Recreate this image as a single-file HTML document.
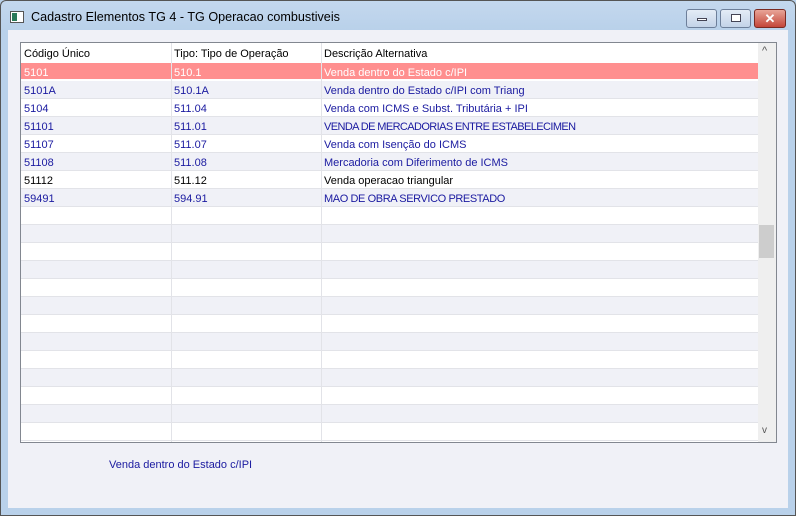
<!DOCTYPE html>
<html><head><style>
*{margin:0;padding:0;box-sizing:border-box}
body{width:796px;height:516px;overflow:hidden;background:#b9d1ea;font-family:"Liberation Sans",sans-serif;font-size:11px;position:relative}
.win{position:absolute;left:0;top:0;width:796px;height:516px;border-radius:6px 6px 0 0;background:linear-gradient(#c4d8ee,#b9d1ea 30px);box-shadow:inset 0 0 0 1px #555}
.title{position:absolute;left:31px;top:10px;font-size:12.6px;color:#000}
.ico{position:absolute;left:10px;top:11px;width:14px;height:12px;border:1px solid #555;background:#fff}
.ico:before{content:"";position:absolute;left:1px;top:1px;width:5px;height:8px;background:#2a7a5a}
.client{position:absolute;left:8px;top:30px;width:780px;height:478px;background:#f0f1f7}
.btn{position:absolute;top:9px;height:19px;border:1px solid #6d7f9a;border-radius:3px;background:linear-gradient(#e4ecf6,#c3d3e8)}
.grid{position:absolute;left:20px;top:42px;width:757px;height:401px;border:1px solid #828790;background:#fff;overflow:hidden}
.row{position:absolute;left:0;width:737px;height:18px;border-bottom:1px solid #e2e3e8;color:#1a1aa0}
.row span{position:absolute;top:4px}
.c1{left:3px}.c2{left:153px}.c3{left:303px}
.vl{position:absolute;top:0;width:1px;height:400px;background:#e2e3e8}
.sb{position:absolute;left:737px;top:0;width:18px;height:399px;background:#efefef}
</style></head><body>
<div class="win">
<div class="ico"></div>
<div class="title">Cadastro Elementos TG 4 - TG Operacao combustiveis</div>
<div class="btn" style="left:686px;width:31px"><div style="position:absolute;left:10px;top:8px;width:10px;height:3px;background:#fff;border:1px solid #445"></div></div>
<div class="btn" style="left:720px;width:31px"><div style="position:absolute;left:10px;top:4px;width:10px;height:8px;background:#fff;border:1px solid #445"></div></div>
<div class="btn" style="left:754px;width:32px;background:linear-gradient(#e8a598,#c4463a);border-color:#7a2a22;color:#fff;font-weight:bold;text-align:center;font-size:13px;line-height:17px">✕</div>
<div class="client"></div>
<div class="grid">
<div class="row" style="top:0;height:20px;color:#000;border:none"><span class="c1" style="top:5px">Código Único</span><span class="c2" style="top:5px">Tipo: Tipo de Operação</span><span class="c3" style="top:5px">Descrição Alternativa</span></div>
<div class="row" style="top:20px;background:#ff8f8f;color:#fff;border-bottom:2px solid #fff"><span class="c1">5101</span><span class="c2">510.1</span><span class="c3">Venda dentro do Estado c/IPI</span></div>
<div class="row" style="top:38px;background:#f0f1f7"><span class="c1">5101A</span><span class="c2">510.1A</span><span class="c3">Venda dentro do Estado c/IPI com Triang</span></div>
<div class="row" style="top:56px"><span class="c1">5104</span><span class="c2">511.04</span><span class="c3">Venda com ICMS e Subst. Tributária + IPI</span></div>
<div class="row" style="top:74px;background:#f0f1f7"><span class="c1">51101</span><span class="c2">511.01</span><span class="c3" style="letter-spacing:-0.6px">VENDA DE MERCADORIAS ENTRE ESTABELECIMEN</span></div>
<div class="row" style="top:92px"><span class="c1">51107</span><span class="c2">511.07</span><span class="c3">Venda com Isenção do ICMS</span></div>
<div class="row" style="top:110px;background:#f0f1f7"><span class="c1">51108</span><span class="c2">511.08</span><span class="c3">Mercadoria com Diferimento de ICMS</span></div>
<div class="row" style="top:128px;color:#000"><span class="c1">51112</span><span class="c2">511.12</span><span class="c3">Venda operacao triangular</span></div>
<div class="row" style="top:146px;background:#f0f1f7"><span class="c1">59491</span><span class="c2">594.91</span><span class="c3" style="letter-spacing:-0.4px">MAO DE OBRA SERVICO PRESTADO</span></div>
<div class="row" style="top:164px"></div>
<div class="row" style="top:182px;background:#f0f1f7"></div>
<div class="row" style="top:200px"></div>
<div class="row" style="top:218px;background:#f0f1f7"></div>
<div class="row" style="top:236px"></div>
<div class="row" style="top:254px;background:#f0f1f7"></div>
<div class="row" style="top:272px"></div>
<div class="row" style="top:290px;background:#f0f1f7"></div>
<div class="row" style="top:308px"></div>
<div class="row" style="top:326px;background:#f0f1f7"></div>
<div class="row" style="top:344px"></div>
<div class="row" style="top:362px;background:#f0f1f7"></div>
<div class="row" style="top:380px"></div>
<div class="vl" style="left:150px"></div>
<div class="vl" style="left:300px"></div>
<div class="sb">
<div style="position:absolute;left:4px;top:2px;font-size:11px;color:#555">^</div>
<div style="position:absolute;left:1px;top:182px;width:15px;height:33px;background:#cdcdcd"></div>
<div style="position:absolute;left:4px;top:382px;font-size:10px;color:#555">v</div>
</div>
</div>
<div style="position:absolute;left:109px;top:459px;color:#1a1aa0">Venda dentro do Estado c/IPI</div>
</div>
</body></html>
